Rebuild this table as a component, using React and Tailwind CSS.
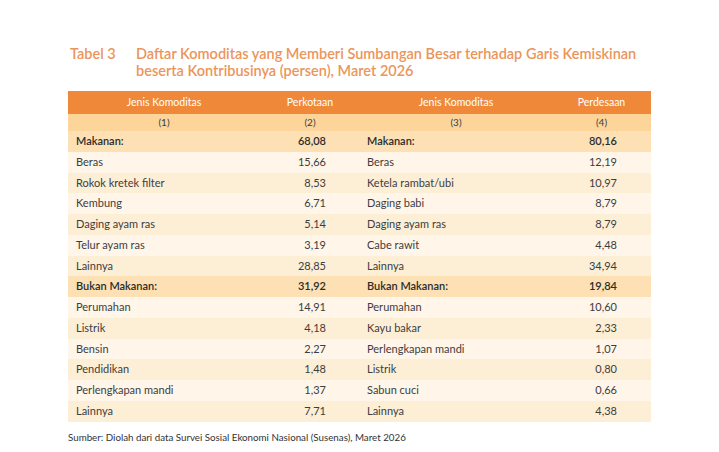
const pangan = [
  ["Beras", "15,66", "Beras", "12,19"],
  ["Rokok kretek filter", "8,53", "Ketela rambat/ubi", "10,97"],
  ["Kembung", "6,71", "Daging babi", "8,79"],
  ["Daging ayam ras", "5,14", "Daging ayam ras", "8,79"],
  ["Telur ayam ras", "3,19", "Cabe rawit", "4,48"],
  ["Lainnya", "28,85", "Lainnya", "34,94"],
];

const nonPangan = [
  ["Perumahan", "14,91", "Perumahan", "10,60"],
  ["Listrik", "4,18", "Kayu bakar", "2,33"],
  ["Bensin", "2,27", "Perlengkapan mandi", "1,07"],
  ["Pendidikan", "1,48", "Listrik", "0,80"],
  ["Perlengkapan mandi", "1,37", "Sabun cuci", "0,66"],
  ["Lainnya", "7,71", "Lainnya", "4,38"],
];

function Row({ cells, bold, bg }) {
  return (
    <div className={`grid grid-cols-[192px_100px_192px_99px] h-[20.75px] items-center ${bg} ${bold ? "font-semibold text-[#2b2b2b]" : "text-[#3d3d3d]"}`}>
      <div className="pl-2">{cells[0]}</div>
      <div className="text-right pr-[34px]">{cells[1]}</div>
      <div className="pl-[7px]">{cells[2]}</div>
      <div className="text-right pr-[34px]">{cells[3]}</div>
    </div>
  );
}

export default function App() {
  return (
    <div className="w-[719px] h-[452px] bg-white font-['Lato',sans-serif]">
      <div className="pt-[45px] pl-[70px] flex text-[14.5px] leading-[17px] font-semibold text-[#eb955a]">
        <div className="w-[66px]">Tabel 3</div>
        <div>
          <div>Daftar Komoditas yang Memberi Sumbangan Besar terhadap Garis Kemiskinan</div>
          <div>beserta Kontribusinya (persen), Maret 2026</div>
        </div>
      </div>

      <div className="ml-[68px] mt-[12px] w-[583px] text-[11px]">
        <div className="grid grid-cols-[192px_100px_192px_99px] h-[23px] items-center bg-[#f0883a] text-white text-[10.5px] text-center">
          <div>Jenis Komoditas</div>
          <div>Perkotaan</div>
          <div>Jenis Komoditas</div>
          <div>Perdesaan</div>
        </div>
        <div className="grid grid-cols-[192px_100px_192px_99px] h-[17px] items-center bg-[#fdd59b] text-[#3d3d3d] text-[10px] text-center">
          <div>(1)</div>
          <div>(2)</div>
          <div>(3)</div>
          <div>(4)</div>
        </div>

        <Row cells={["Makanan:", "68,08", "Makanan:", "80,16"]} bold bg="bg-[#fde1b5]" />
        {pangan.map((r, i) => (
          <Row key={"p" + i} cells={r} bg={i % 2 === 0 ? "bg-[#fff5e9]" : "bg-[#fdeed6]"} />
        ))}

        <Row cells={["Bukan Makanan:", "31,92", "Bukan Makanan:", "19,84"]} bold bg="bg-[#fde1b5]" />
        {nonPangan.map((r, i) => (
          <Row key={"n" + i} cells={r} bg={i % 2 === 0 ? "bg-[#fff5e9]" : "bg-[#fdeed6]"} />
        ))}
      </div>

      <div className="ml-[68px] mt-[8px] text-[9.75px] text-[#333]">
        Sumber: Diolah dari data Survei Sosial Ekonomi Nasional (Susenas), Maret 2026
      </div>
    </div>
  );
}
